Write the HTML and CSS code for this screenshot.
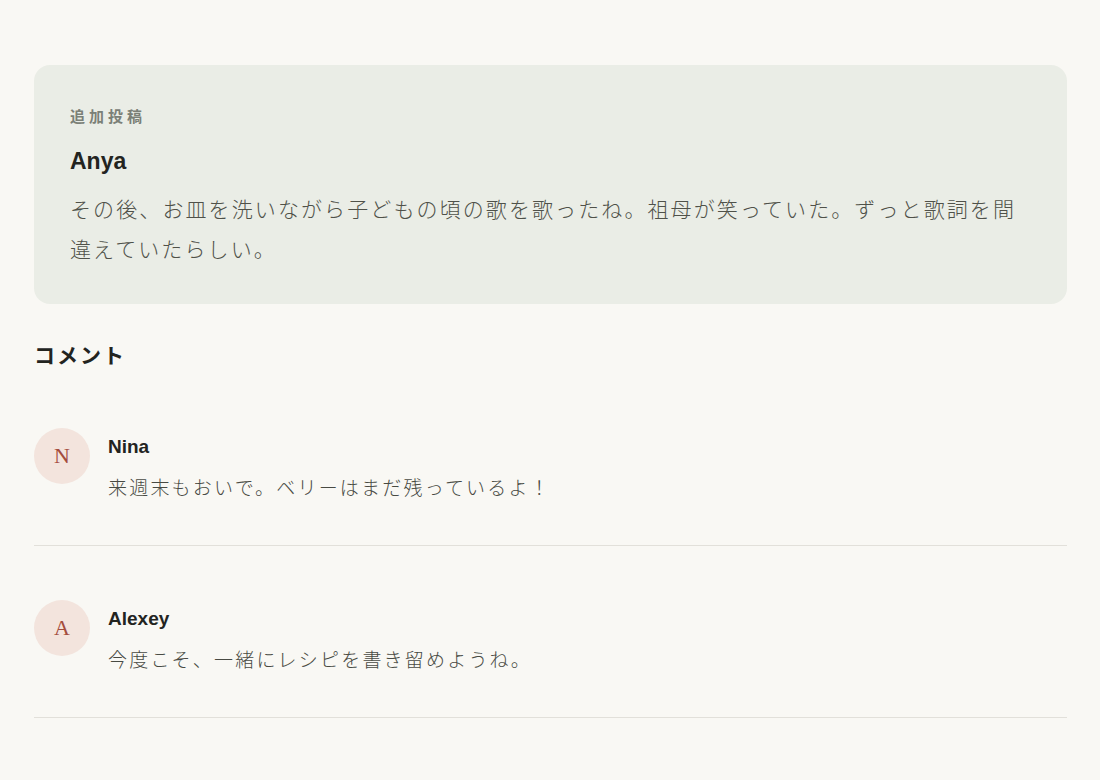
FILE: index.html
```html
<!DOCTYPE html>
<html lang="ja">
<head>
<meta charset="utf-8">
<link rel="stylesheet" href="styles.css">
</head>
<body>
<main class="page">
  <section class="card">
    <div class="label">追加投稿</div>
    <h2 class="author">Anya</h2>
    <p class="body">その後、お皿を洗いながら子どもの頃の歌を歌ったね。祖母が笑っていた。ずっと歌詞を間違えていたらしい。</p>
  </section>
  <h3 class="heading">コメント</h3>
  <ul class="comments">
    <li class="comment">
      <div class="avatar">N</div>
      <div class="c-body">
        <div class="c-name">Nina</div>
        <div class="c-text">来週末もおいで。ベリーはまだ残っているよ！</div>
      </div>
    </li>
    <li class="comment">
      <div class="avatar">A</div>
      <div class="c-body">
        <div class="c-name">Alexey</div>
        <div class="c-text">今度こそ、一緒にレシピを書き留めようね。</div>
      </div>
    </li>
  </ul>
</main>
</body>
</html>
```
FILE: styles.css
```css
html, body {
  margin: 0;
  padding: 0;
  background: #f9f8f4;
}
body {
  font-family: "Liberation Sans", "Noto Sans CJK JP", sans-serif;
  color: #2a2a28;
}
.page {
  padding: 65px 33px 40px 34px;
}
.card {
  background: #eaede6;
  border-radius: 16px;
  padding: 42px 36px 34px;
}
.label {
  font-size: 15px;
  line-height: 20px;
  letter-spacing: 4px;
  font-weight: bold;
  color: #7b8077;
}
.author {
  margin: 20px 0 0;
  font-size: 23px;
  line-height: 28px;
  font-weight: bold;
  color: #23241f;
}
.body {
  margin: 15px 0 0;
  font-size: 21px;
  line-height: 40px;
  letter-spacing: 2.1px;
  font-weight: 300;
  color: #4f5149;
}
.heading {
  margin: 37px 0 0;
  font-size: 21px;
  line-height: 30px;
  letter-spacing: 2px;
  font-weight: bold;
  color: #23241f;
}
.comments {
  list-style: none;
  margin: 3px 0 0;
  padding: 0;
}
.comment {
  display: flex;
  align-items: flex-start;
  gap: 18px;
  padding: 54px 0 41px;
  border-bottom: 1px solid #e2e0da;
}
.avatar {
  flex: 0 0 56px;
  width: 56px;
  height: 56px;
  border-radius: 50%;
  background: #f3e4dd;
  color: #a44d3d;
  font-family: "Liberation Serif", serif;
  font-size: 22px;
  display: flex;
  align-items: center;
  justify-content: center;
}
.c-body {
  padding-top: 7px;
}
.c-name {
  font-size: 19px;
  line-height: 24px;
  font-weight: bold;
  color: #23241f;
}
.c-text {
  margin-top: 15px;
  font-size: 19px;
  line-height: 30px;
  letter-spacing: 2.2px;
  font-weight: 300;
  color: #484a43;
}
```
